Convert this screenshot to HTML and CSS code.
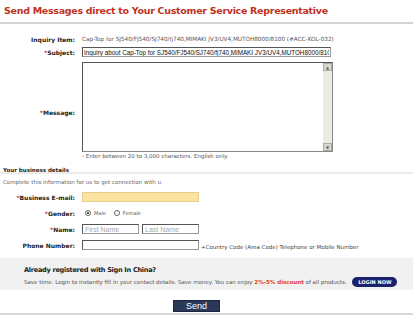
FILE: index.html
```html
<!DOCTYPE html>
<html lang="en">
<head>
    <meta charset="UTF-8">
    <title>Send Messages</title>
    <link rel="stylesheet" href="styles.css">
</head>
<body>

    <!-- Heading -->
    <h1 class="title">Send Messages direct to Your Customer Service Representative</h1>

    <!-- Inquiry -->
    <div class="form-grid">
        <div class="label">Inquiry Item:</div>
        <div class="field item-text">Cap-Top for SJ540/FJ540/SJ740/fj740,MIMAKI JV3/UV4,MUTOH8000/8100 (#ACC-KOL-032)</div>

        <div class="label"><span class="req">*</span>Subject:</div>
        <div class="field"><input type="text" class="subject" value="Inquiry about Cap-Top for SJ540/FJ540/SJ740/fj740,MIMAKI JV3/UV4,MUTOH8000/8100"></div>

        <div class="label msg-label"><span class="req">*</span>Message:</div>
        <div class="field">
            <div class="message">
                <div class="scroll">
                    <span class="arrow">&#9650;</span>
                    <span class="arrow">&#9660;</span>
                </div>
            </div>
        </div>

        <div></div>
        <div class="field hint">- Enter between 20 to 3,000 characters. English only.</div>
    </div>

    <!-- Business details -->
    <div class="section-head">Your business details</div>
    <p class="intro">Complete this information for us to get connection with u.</p>

    <div class="form-grid details">
        <div class="label"><span class="req">*</span>Business E-mail:</div>
        <div class="field"><input type="text" class="email"></div>

        <div class="label"><span class="req">*</span>Gender:</div>
        <div class="field gender">
            <label><span class="radio checked"></span>Male</label>
            <label><span class="radio"></span>Female</label>
        </div>

        <div class="label"><span class="req">*</span>Name:</div>
        <div class="field names">
            <input type="text" class="name" placeholder="First Name">
            <input type="text" class="name" placeholder="Last Name">
        </div>

        <div class="label">Phone Number:</div>
        <div class="field phone">
            <input type="text" class="email plain">
            <span class="phone-hint">+Country Code (Area Code) Telephone or Mobile Number</span>
        </div>
    </div>

    <!-- Sign in band -->
    <div class="signin">
        <h3>Already registered with Sign In China?</h3>
        <p>Save time. Login to instantly fill in your contact details. Save money. You can enjoy <b>2%-5% discount</b> of all products. <span class="login-btn">LOGIN NOW</span></p>
    </div>

    <div class="actions">
        <button type="button" class="send">Send</button>
    </div>

</body>
</html>
```

FILE: styles.css
```css
* {
    margin: 0;
    padding: 0;
    box-sizing: border-box;
}

body {
    font-family: 'DejaVu Sans', Verdana, sans-serif;
    background: #fff;
    color: #333;
    width: 413px;
    height: 315px;
    overflow: hidden;
    border-bottom: 2px solid #d8d8d8;
}

.title {
    font-size: 9.5px;
    font-weight: bold;
    color: #c0311c;
    letter-spacing: -0.3px;
    padding: 5px 4px 0;
    height: 24px;
    border-bottom: 2px solid #d2d2d2;
}

.form-grid {
    display: grid;
    grid-template-columns: 75px 1fr;
    column-gap: 7px;
    align-items: center;
    margin-top: 9px;
}

.label {
    text-align: right;
    font-size: 6px;
    font-weight: bold;
    color: #222;
}

.msg-label {
    padding-top: 14px;
}

.req {
    color: #c0311c;
}

.field {
    font-size: 5.5px;
    color: #555;
}

.item-text {
    font-size: 5.7px;
    height: 13px;
    line-height: 13px;
}

input[type="text"] {
    font-family: 'Liberation Sans', Arial, sans-serif;
    font-size: 7px;
    height: 10px;
    padding: 0 2px;
    border: 1px solid #999;
    border-top-color: #555;
    border-left-color: #555;
    background: #fff;
    color: #111;
    outline: none;
}

.subject {
    width: 249px;
    font-size: 6.3px !important;
    padding: 0 1px !important;
    margin: 1px 0;
}

.message {
    width: 251px;
    height: 90px;
    margin-top: 4px;
    border: 1px solid #888;
    border-top-color: #555;
    border-left-color: #555;
    display: flex;
    justify-content: flex-end;
}

.scroll {
    width: 9px;
    background: #ecebe4;
    display: flex;
    flex-direction: column;
    justify-content: space-between;
}

.arrow {
    display: block;
    height: 8px;
    font-size: 4px;
    line-height: 8px;
    text-align: center;
    color: #555;
    background: #d9d8d0;
    border: 1px solid #aaa;
}

.hint {
    height: 9px;
    line-height: 9px;
}

.section-head {
    font-size: 5.5px;
    font-weight: bold;
    color: #222;
    padding: 6px 3px 0;
    height: 13px;
    border-bottom: 2px solid #ececec;
}

.intro {
    font-size: 5.5px;
    color: #666;
    padding: 5px 3px 0;
    height: 18px;
}

.details {
    margin-top: 0;
    row-gap: 6px;
}

.email {
    width: 117px;
    background: #fbe3a1 !important;
    border-color: #e8cf8a !important;
}

.email.plain {
    background: #fff !important;
    border: 1px solid #999 !important;
    border-top-color: #555 !important;
    border-left-color: #555 !important;
}

.gender {
    display: flex;
    gap: 8px;
    height: 10px;
    align-items: center;
    padding-left: 3px;
    font-size: 5px;
}

.gender label {
    display: flex;
    align-items: center;
    gap: 3px;
}

.radio {
    width: 6px;
    height: 6px;
    border-radius: 50%;
    border: 1px solid #666;
    background: #fff;
    position: relative;
}

.radio.checked::after {
    content: "";
    position: absolute;
    left: 1px;
    top: 1px;
    width: 2px;
    height: 2px;
    border-radius: 50%;
    background: #222;
}

.names {
    display: flex;
    gap: 3px;
}

.name {
    width: 57px;
}

.name::placeholder {
    color: #aaa;
}

.phone {
    display: flex;
    align-items: flex-end;
    gap: 2px;
}

.phone-hint {
    font-size: 5.5px;
    color: #444;
}

.signin {
    background: #f1f1f1;
    margin-top: 8px;
    height: 32px;
    padding: 8px 24px 0;
}

.signin h3 {
    font-size: 6.6px;
    font-weight: bold;
    letter-spacing: -0.3px;
    color: #222;
    margin-bottom: 3px;
}

.signin p {
    font-size: 5.5px;
    color: #555;
    white-space: nowrap;
}

.signin b {
    color: #e0401c;
}

.login-btn {
    display: inline-block;
    background: #1a1f6e;
    color: #fff;
    font-size: 5px;
    font-weight: bold;
    padding: 2px 6px;
    border-radius: 5px;
    margin-left: 4px;
}

.actions {
    display: flex;
    justify-content: center;
    padding-top: 10px;
}

.send {
    font-family: 'Liberation Sans', Arial, sans-serif;
    font-size: 9px;
    background: #2c3858;
    color: #fff;
    border: 1px solid #1c2440;
    width: 47px;
    height: 12px;
    line-height: 10px;
    margin-right: 20px;
}
```
